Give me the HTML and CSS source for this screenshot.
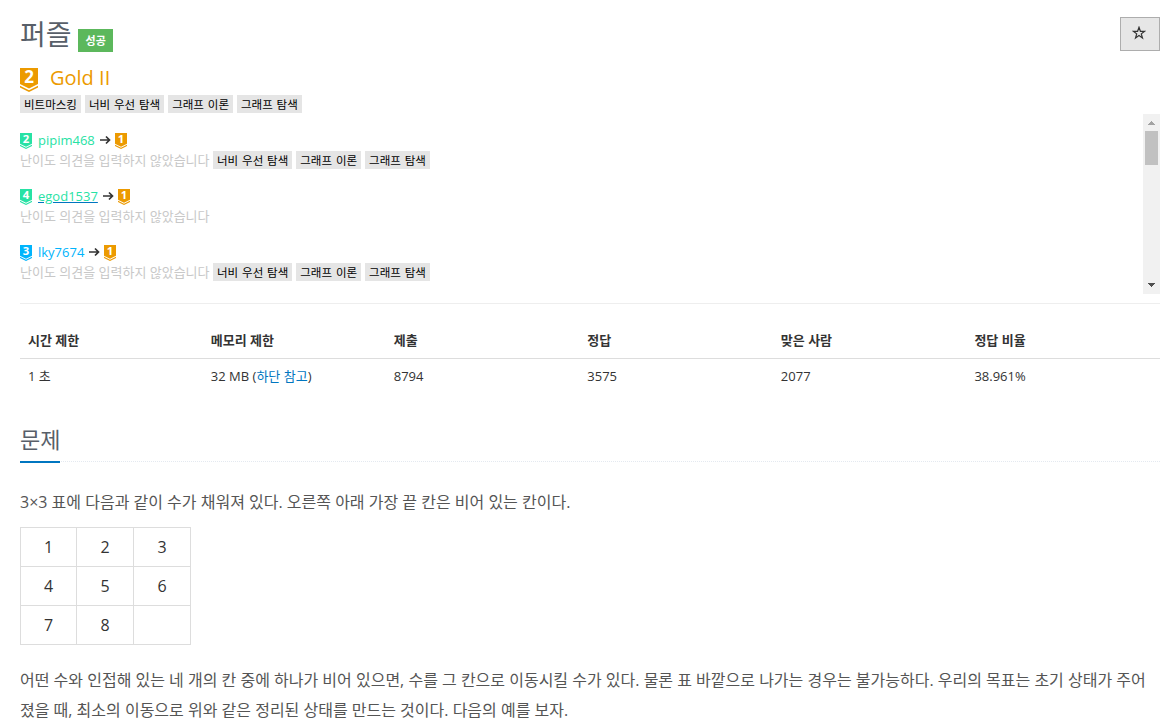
FILE: index.html
```html
<!DOCTYPE html>
<html lang="ko">
<head>
  <meta charset="UTF-8">
  <meta name="viewport" content="width=device-width, initial-scale=1.0">
  <title>퍼즐</title>
  <link rel="stylesheet" href="styles.css">
</head>
<body>
  <svg class="defs">
    <symbol id="tier" viewBox="0 0 18 24">
      <path d="M0 0H18V16L9 20.5L0 16Z"/>
      <path d="M0 17.7L9 22.2L18 17.7V19.4L9 24L0 19.4Z"/>
    </symbol>
  </svg>

  <div class="container">
    <div class="title-row">
      <h1>퍼즐 <span class="label-success">성공</span></h1>
      <button class="btn-star"><svg viewBox="0 0 14 14"><path d="M7 1.3L8.4 5.3H12.6L9.3 7.9L10.5 12L7 9.6L3.5 12L4.7 7.9L1.4 5.3H5.6Z"/></svg></button>
    </div>

    <div class="level">
      <svg class="tier-big gold" viewBox="0 0 18 24"><use href="#tier"/><text x="9" y="15">2</text></svg>
      <span>Gold II</span>
    </div>
    <div class="tags">
      <span class="tag">비트마스킹</span>
      <span class="tag">너비 우선 탐색</span>
      <span class="tag">그래프 이론</span>
      <span class="tag">그래프 탐색</span>
    </div>

    <div class="votes">
      <div class="vote-list">
        <div class="vote">
          <div class="user">
            <svg class="tier gp" viewBox="0 0 18 24"><use href="#tier"/><text x="9" y="15">2</text></svg>
            <a class="name gp">pipim468</a>
            <svg class="arrow" viewBox="0 0 12 10"><path d="M1 5H10.5M7 1.5L10.5 5L7 8.5"/></svg>
            <svg class="tier gold" viewBox="0 0 18 24"><use href="#tier"/><text x="9" y="15">1</text></svg>
          </div>
          <div class="comment">
            <span class="empty">난이도 의견을 입력하지 않았습니다</span>
            <span class="tag">너비 우선 탐색</span>
            <span class="tag">그래프 이론</span>
            <span class="tag">그래프 탐색</span>
          </div>
        </div>
        <div class="vote">
          <div class="user">
            <svg class="tier gp" viewBox="0 0 18 24"><use href="#tier"/><text x="9" y="15">4</text></svg>
            <a class="name gp hover">egod1537</a>
            <svg class="arrow" viewBox="0 0 12 10"><path d="M1 5H10.5M7 1.5L10.5 5L7 8.5"/></svg>
            <svg class="tier gold" viewBox="0 0 18 24"><use href="#tier"/><text x="9" y="15">1</text></svg>
          </div>
          <div class="comment">
            <span class="empty">난이도 의견을 입력하지 않았습니다</span>
          </div>
        </div>
        <div class="vote">
          <div class="user">
            <svg class="tier dia" viewBox="0 0 18 24"><use href="#tier"/><text x="9" y="15">3</text></svg>
            <a class="name dia">lky7674</a>
            <svg class="arrow" viewBox="0 0 12 10"><path d="M1 5H10.5M7 1.5L10.5 5L7 8.5"/></svg>
            <svg class="tier gold" viewBox="0 0 18 24"><use href="#tier"/><text x="9" y="15">1</text></svg>
          </div>
          <div class="comment">
            <span class="empty">난이도 의견을 입력하지 않았습니다</span>
            <span class="tag">너비 우선 탐색</span>
            <span class="tag">그래프 이론</span>
            <span class="tag">그래프 탐색</span>
          </div>
        </div>
      </div>
      <div class="scrollbar">
        <svg class="up" viewBox="0 0 17 17" shape-rendering="crispEdges"><path d="M5 11H12L8.5 7Z"/></svg>
        <div class="thumb"></div>
        <svg class="down" viewBox="0 0 17 17" shape-rendering="crispEdges"><path d="M5 6H12L8.5 10Z"/></svg>
      </div>
    </div>

    <table class="info">
      <thead>
        <tr><th class="w16">시간 제한</th><th class="w16">메모리 제한</th><th>제출</th><th>정답</th><th>맞은 사람</th><th>정답 비율</th></tr>
      </thead>
      <tbody>
        <tr><td>1 초</td><td>32 MB (<a href="#limit">하단 참고</a>)</td><td>8794</td><td>3575</td><td>2077</td><td>38.961%</td></tr>
      </tbody>
    </table>

    <div class="headline">
      <h2>문제</h2>
    </div>
    <div class="problem">
      <p>3×3 표에 다음과 같이 수가 채워져 있다. 오른쪽 아래 가장 끝 칸은 비어 있는 칸이다.</p>
      <table class="puzzle">
        <tr><td class="first">1</td><td>2</td><td>3</td></tr>
        <tr><td>4</td><td>5</td><td>6</td></tr>
        <tr><td>7</td><td>8</td><td></td></tr>
      </table>
      <p>어떤 수와 인접해 있는 네 개의 칸 중에 하나가 비어 있으면, 수를 그 칸으로 이동시킬 수가 있다. 물론 표 바깥으로 나가는 경우는 불가능하다. 우리의 목표는 초기 상태가 주어졌을 때, 최소의 이동으로 위와 같은 정리된 상태를 만드는 것이다. 다음의 예를 보자.</p>
    </div>
  </div>
</body>
</html>
```
FILE: styles.css
```css
* {
  box-sizing: border-box;
}
body {
  margin: 0;
  height: 722px;
  overflow: hidden;
  background-color: #fff;
  color: #333;
  font-family: 'Open Sans', 'Noto Sans CJK KR', sans-serif;
  font-size: 13px;
  line-height: 20px;
}
.defs {
  display: none;
}
.container {
  padding: 17px 5px 0 20px;
}

.title-row {
  display: flex;
  justify-content: space-between;
  height: 49px;
}
h1 {
  display: flex;
  gap: 6.5px;
  margin: 0;
  font-size: 28px;
  font-weight: normal;
  line-height: 35px;
  color: #585f69;
}
.label-success {
  height: 23px;
  margin-top: 12px;
  padding: 0 7.5px;
  background-color: #5cb85c;
  color: #fff;
  font-size: 11px;
  font-weight: bold;
  line-height: 23px;
}
.btn-star {
  width: 40px;
  height: 34px;
  padding: 0;
  background-color: #e6e6e6;
  border: 1px solid #adadad;
}
.btn-star svg {
  display: block;
  width: 14px;
  height: 14px;
  margin: 0 auto 2px 11px;
  fill: none;
  stroke: #333;
  stroke-width: 1.2;
}

.level {
  display: flex;
  gap: 12px;
  height: 29px;
  color: #ec9a00;
  font-size: 20px;
  line-height: 24px;
}
.tier-big {
  width: 18px;
  height: 24px;
  margin-top: 2px;
}
.tier,
.tier-big {
  overflow: visible;
}
.gold {
  fill: #ec9a00;
}
.gp {
  fill: #27e2a4;
  color: #27e2a4;
}
.dia {
  fill: #00b4fc;
  color: #00b4fc;
}
svg text {
  fill: #fff;
  font-family: 'Open Sans', sans-serif;
  font-size: 17px;
  font-weight: bold;
  line-height: 1;
  text-anchor: middle;
}

.tags {
  display: flex;
  gap: 4px;
}
.tag {
  height: 18px;
  padding: 0 4px;
  background-color: #e5e5e5;
  color: #000;
  font-size: 11.5px;
  line-height: 19px;
  word-spacing: 0.9px;
  white-space: nowrap;
}

.votes {
  display: flex;
  justify-content: space-between;
  height: 190px;
  margin-top: 1px;
  padding-bottom: 9px;
  border-bottom: 1px solid #eee;
}
.vote-list {
  padding-top: 16px;
}
.vote {
  height: 56px;
}
.user {
  display: flex;
  align-items: center;
  height: 20px;
}
.tier {
  width: 12px;
  height: 16px;
  margin-top: 1px;
}
.name {
  margin-left: 6px;
}
.hover {
  text-decoration: underline #0076c0;
}
.arrow {
  width: 12px;
  height: 10px;
  margin: 0 4px;
  fill: none;
  stroke: #333;
  stroke-width: 1.7;
}
.comment {
  display: flex;
  gap: 4px;
  align-items: center;
  height: 20px;
}
.empty {
  width: 189px;
  color: #c8c8c8;
  white-space: nowrap;
}

.scrollbar {
  display: flex;
  flex-direction: column;
  width: 17px;
  height: 180px;
  background-color: #f1f1f1;
}
.scrollbar svg {
  width: 17px;
  height: 17px;
}
.up {
  fill: #a3a3a3;
}
.down {
  margin-top: auto;
  fill: #505050;
}
.thumb {
  width: 13px;
  height: 34px;
  margin-left: 2px;
  background-color: #c1c1c1;
}

.info {
  width: 100%;
  margin-top: 19px;
  table-layout: fixed;
  border-collapse: collapse;
}
.info th {
  width: 17%;
  text-align: left;
  border-bottom: 1px solid #ddd;
}
.info .w16 {
  width: 16.06%;
}
.info th,
.info td {
  padding: 8px;
  line-height: 19px;
}
a {
  color: #0076c0;
  text-decoration: none;
}
a.gp {
  color: #27e2a4;
}
a.dia {
  color: #00b4fc;
}

.headline {
  display: flex;
  margin-top: 27px;
  height: 41px;
  border-bottom: 1px dotted #e4e9f0;
}
h2 {
  height: 42px;
  margin: 0;
  border-bottom: 2px solid #0076c0;
  color: #585f69;
  font-size: 22px;
  font-weight: normal;
  line-height: 36px;
}

.problem {
  padding-top: 25px;
  color: #555;
  font-size: 16px;
}
.problem p {
  margin: 0;
  line-height: 30px;
}
.puzzle {
  width: 171px;
  margin: 10px 0 20px;
  table-layout: fixed;
  border-collapse: collapse;
  color: #333;
  text-align: center;
}
.puzzle .first {
  width: 56px;
}
.puzzle td {
  height: 39px;
  padding: 0;
  border: 1px solid #ddd;
}
```
